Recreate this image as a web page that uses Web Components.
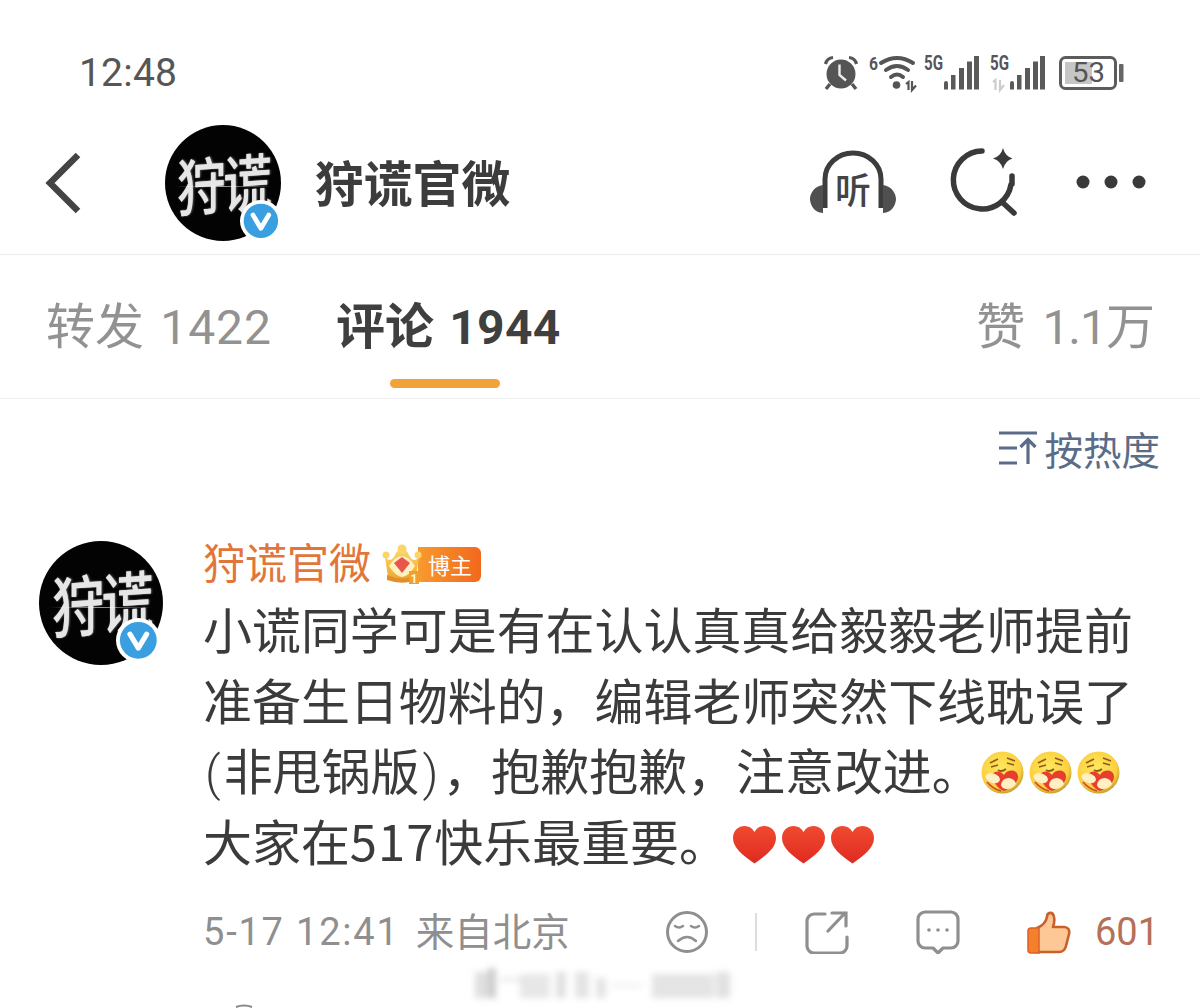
<!DOCTYPE html>
<html lang="zh"><head><meta charset="utf-8"><title>评论</title>
<style>
html,body{margin:0;padding:0;background:#fff}
body{width:1200px;height:1008px;overflow:hidden;position:relative;font-family:"Roboto","Noto Sans CJK SC",sans-serif}
x-comment .par{font-family:Roboto,sans-serif;font-weight:300;margin:0 3px 0 2px;line-height:1}
x-comment .par.e{margin:0 4px 0 3px}
x-comment .dg{letter-spacing:1px;line-height:1}
</style></head><body>
<x-status></x-status>
<x-nav></x-nav>
<x-tabs></x-tabs>
<x-sort></x-sort>
<x-comment>小谎同学可是有在认认真真给毅毅老师提前<br>准备生日物料的，编辑老师突然下线耽误了<br><span class="par">(</span>非甩锅版<span class="par e">)</span>，抱歉抱歉，注意改进。<x-emoji></x-emoji><x-emoji></x-emoji><x-emoji></x-emoji><br>大家在<span class="dg">517</span>快乐最重要。<x-heart></x-heart><x-heart></x-heart><x-heart></x-heart></x-comment>
<x-watermark></x-watermark>
<script>
const FONT='"Roboto","Noto Sans CJK SC",sans-serif';
function def(name,html){
  customElements.define(name,class extends HTMLElement{
    constructor(){super();this.attachShadow({mode:'open'}).innerHTML=html;}
  });
}
def('x-avatar',`<style>
:host{display:block;position:relative;width:var(--s);height:var(--s);flex:none}
.c{width:100%;height:100%;border-radius:50%;background:#030303;display:flex;align-items:center;justify-content:center;overflow:hidden;position:relative}
.t{color:#e6e6e6;font:500 calc(var(--s)*.42)/1 "Noto Sans CJK SC",sans-serif;letter-spacing:-.05em;white-space:nowrap;transform:translateY(-3%) scaleY(1.28) skewY(-3deg);text-shadow:0 0 1px rgba(255,255,255,.6),1px 0 2px rgba(255,255,255,.35)}
.l{position:absolute;left:8%;right:8%;top:53%;height:1px;background:linear-gradient(90deg,transparent,rgba(255,255,255,.6),transparent)}
svg{position:absolute;right:var(--o);bottom:var(--o);width:calc(var(--s)*.36);height:calc(var(--s)*.36)}
</style><div class="c"><span class="t">狩谎</span><i class="l"></i></div>
<svg viewBox="0 0 40 40"><circle cx="20" cy="20" r="20" fill="#fff"/><circle cx="20" cy="20" r="16.5" fill="#3a9fe0"/><path d="M12.5 14.5 20 27l7.5-12.5" fill="none" stroke="#fff" stroke-width="4.6" stroke-linejoin="round" stroke-linecap="round"/></svg>`);

const BARS=`<path d="M20 28a2 2 0 0 1 4 0v6.500h-4zM27 20h4.500v14.500H27zM35 13h5v21.500h-5zM43 6.500h5v28h-5zM50 1h5v33.500h-5z" fill="#5a5a5a"/>`;
def('x-status',`<style>
:host{display:flex;height:125px;box-sizing:border-box;padding:0 76px 0 79px;align-items:flex-start;justify-content:space-between;color:#555;font-family:${FONT}}
.time{font-size:39px;line-height:46px;margin-top:50px;color:#565656;letter-spacing:.2px}
.r{display:flex;margin-top:55px;height:36px;align-items:center}
svg{display:block;flex:none;overflow:visible}
text{font-family:"Roboto",sans-serif;font-weight:700;fill:#555}
</style><span class="time">12:48</span><div class="r">
<svg width="34" height="36" viewBox="0 0 34 36" style="margin-right:11px">
<circle cx="17" cy="19" r="14.5" fill="#555"/><path d="M15.500 9.500v10.500l6.500 5.500" fill="none" stroke="#eee" stroke-width="2.400"/>
<path d="M1.500 9Q3 3 9 2.500M32.500 9Q31 3 25 2.500" fill="none" stroke="#555" stroke-width="3.200"/><path d="M6 29l-4 5M28 29l4 5" stroke="#555" stroke-width="3.400"/></svg>
<svg width="47" height="36" viewBox="0 0 47 36" style="margin-right:8px">
<text x="0" y="14.500" font-size="19" textLength="9" lengthAdjust="spacingAndGlyphs">6</text>
<path d="M12 8Q28-2 44 8M17 15Q28 7 39 15M22 22Q28 17 34 22" fill="none" stroke="#555" stroke-width="4" stroke-linecap="round"/><circle cx="27.500" cy="30" r="3.800" fill="#555"/>
<path d="M37 29l2.500-2v8M43 26v9l4-4.500" fill="none" stroke="#555" stroke-width="2.200"/></svg>
<svg width="55" height="36" viewBox="0 0 55 36" style="margin-right:11px">
<text x="0" y="15" font-size="20" textLength="19" lengthAdjust="spacingAndGlyphs">5G</text>${BARS}</svg>
<svg width="55" height="36" viewBox="0 0 55 36" style="margin-right:14px">
<text x="0" y="15" font-size="20" textLength="19" lengthAdjust="spacingAndGlyphs">5G</text>
<path d="M3 27l2.500-2v10M10 25v10l4-5" fill="none" stroke="#ccc" stroke-width="2.200"/>${BARS}</svg>
<svg width="65" height="34" viewBox="0 0 65 34">
<rect x="1.500" y="1.500" width="55" height="31" rx="5" fill="#fff" stroke="#5c5c5c" stroke-width="3"/><rect x="6" y="6" width="27" height="22" fill="#c6c6c6"/>
<rect x="60" y="8" width="4.500" height="18" rx="1" fill="#666"/>
<text x="13" y="26" font-size="27" textLength="33" lengthAdjust="spacingAndGlyphs" style="font-weight:400">53</text></svg>
</div>`);

def('x-nav',`<style>
:host{display:flex;height:130px;box-sizing:border-box;border-bottom:1px solid #ececec;align-items:flex-start;padding-left:45px;--s:116px;--o:-1px;font-family:${FONT}}
.back{margin:27px 84px 0 0;display:block;flex:none}
.name{font:700 48.800px/112px "Noto Sans CJK SC",sans-serif;color:#3c3c3c;margin-left:34px;flex:1}
.i{display:block;flex:none;margin-top:25px}
</style>
<svg class="back" width="36" height="62" viewBox="0 0 36 62"><path d="M33 3 5 31l28 28" fill="none" stroke="#444" stroke-width="6.500"/></svg>
<x-avatar></x-avatar><span class="name">狩谎官微</span>
<svg class="i" width="88" height="64" viewBox="0 0 88 64" style="margin-right:52px">
<path d="M16 58V29a28 26 0 0 1 56 0v29" fill="none" stroke="#3d3d3d" stroke-width="5"/>
<path d="M14 35C5 36 1 44 1 49s4 14 13 14zM74 35c9 1 13 9 13 14s-4 14-13 14z" fill="#505050"/>
<text x="44" y="53.500" text-anchor="middle" font-size="36" font-weight="500" font-family="'Noto Sans CJK SC',sans-serif" fill="#444">听</text></svg>
<svg class="i" width="70" height="70" viewBox="0 0 70 70" style="margin:23px 57px 0 0">
<path d="M33 3a29 29 0 1 0 29 33.500M63 28v8" fill="none" stroke="#3a3a3a" stroke-width="5.500" stroke-linecap="round"/>
<path d="M53 54l12 11" stroke="#3a3a3a" stroke-width="5.500" stroke-linecap="round"/>
<path d="M54 0q2 8 9.500 10.500Q56 13 54 21q-2-8-10-10.500Q52 8 54 0z" fill="#3a3a3a"/></svg>
<svg class="i" width="70" height="14" viewBox="0 0 70 14" style="margin:50px 54px 0 0"><circle cx="7" cy="7" r="6.500" fill="#3a3a3a"/><circle cx="35" cy="7" r="6.500" fill="#3a3a3a"/><circle cx="63" cy="7" r="6.500" fill="#3a3a3a"/></svg>`);

def('x-tabs',`<style>
:host{display:flex;height:144px;box-sizing:border-box;border-bottom:1px solid #efefef;padding:0 45px 0 46px;font:400 49px/56px ${FONT};color:#929292}
.t{margin-top:45px;white-space:nowrap}
.d{font-size:48px;letter-spacing:1px;margin-left:4px}
.a{margin-left:64px;font-weight:700;color:#3f3f3f;display:flex;flex-direction:column;flex:1;align-items:flex-start}
.a .d{letter-spacing:.3px;margin-left:3px}
.z{letter-spacing:-1px;margin-left:5px}
.u{display:block;width:110px;height:9px;border-radius:5px;background:#f2a337;margin:23px 0 0 54px}
</style><span class="t">转发 <span class="d">1422</span></span><span class="t a"><span>评论 <span class="d">1944</span></span><i class="u"></i></span><span class="t">赞 <span class="d z">1.1</span>万</span>`);

def('x-sort',`<style>
:host{display:flex;justify-content:flex-end;align-items:center;height:97px;padding:0 40px 0 0;color:#5a6c88;font:400 38.500px/44px "Noto Sans CJK SC",sans-serif}
svg{margin-right:7px;display:block}
</style><svg width="38" height="34" viewBox="0 0 38 34"><path d="M0 2h38M0 17h18M0 32h18" stroke="#5a6c88" stroke-width="3.200" fill="none"/><path d="M29 33V10M21.500 16 29 8.500l7.500 7.500" stroke="#5a6c88" stroke-width="3.200" fill="none"/></svg><span>按热度</span>`);

def('x-emoji',`<style>:host{display:inline-block;width:43px;height:43px;margin:-10px 5px -10px 0;vertical-align:6px}svg{display:block}</style>
<svg width="43" height="43" viewBox="0 0 43 43"><defs><radialGradient id="g" cx=".45" cy=".4" r=".6"><stop offset="0" stop-color="#ffe85e"/><stop offset=".8" stop-color="#fbcf40"/><stop offset="1" stop-color="#c9a02c"/></radialGradient></defs>
<circle cx="21.500" cy="21.500" r="21" fill="url(#g)"/>
<path d="M9 12l8-4M10 16l7-2M26 7l8 3M26 12l7 2" stroke="#8a5a20" stroke-width="1.600" fill="none"/><path d="M17 19q4 2.500 8-1" stroke="#8a5a20" stroke-width="1.800" fill="none"/>
<path d="M11 24c3-5 9-4 12 0 3-6 13-6 14 1 1 7-9 13-14 15-6-2-11-9-12-16z" fill="#e83f2c"/>
<path d="M4 25q4-5 10-2 5 2 5 6-2 4-7 3-6-1-8-7zM20 34q1-7 8-7 6 1 7 6-3 5-9 5-5 0-6-4z" fill="#fff0c4"/><path d="M6 31q6 7 14 9" stroke="#c9502a" stroke-width="1.800" fill="none"/></svg>`);

def('x-heart',`<style>:host{display:inline-block;width:43px;height:38px;margin:-10px 6px -10px 0;vertical-align:7px}:host(:first-of-type){margin-left:5px}svg{display:block}</style>
<svg width="43" height="38" viewBox="0 0 43 38"><defs><linearGradient id="h" x1="0" y1="0" x2="0" y2="1"><stop offset="0" stop-color="#ef4a30"/><stop offset="1" stop-color="#e02a20"/></linearGradient></defs>
<path d="M21.500 37.500C10 29.500 0 22 0 12 0 4 6 0 11.500 0 16 0 19.500 2 21.500 6 23.500 2 27 0 31.500 0 37 0 43 4 43 12c0 10-10 17.500-21.500 25.500z" fill="url(#h)"/></svg>`);

def('x-comment',`<style>
:host{display:flex;padding:45px 0 0 39px;--s:124px;--o:2px;font-family:"Noto Sans CJK SC",sans-serif}
.m{margin-left:40px;flex:1;min-width:0}
.h{display:flex;align-items:center;height:46px}
.n{font-size:42px;line-height:46px;color:#e2763a;margin:0 0 6px 0}
.b{display:flex;margin-left:11px;align-items:center;position:relative}
.b svg{display:block;position:relative;z-index:1;margin-right:-4px}
.p{background:linear-gradient(90deg,#f89a2e,#f2681d);color:#fff;font-size:22px;line-height:35px;height:35px;width:63px;box-sizing:border-box;padding-left:10px;border-radius:0 6px 6px 0;white-space:nowrap}
.t{font-size:48.950px;line-height:70.500px;color:#3b3b3b;margin-top:6px;white-space:nowrap}
.f{display:flex;align-items:center;height:60px;margin-top:27px;color:#8f8f8f;font-size:38.500px;margin-right:41px}
.f .d{font-family:"Roboto",sans-serif;font-size:38px;letter-spacing:1.8px;margin-right:16px}
.f .l{margin-bottom:6px}
.f .w{flex:1}
.f svg{display:block;flex:none}
.c{font-family:"Roboto",sans-serif;color:#b5705a;margin-left:24px;font-size:38px}
</style>
<x-avatar></x-avatar>
<div class="m">
<div class="h"><span class="n">狩谎官微</span><span class="b">
<svg width="40" height="40" viewBox="0 0 40 40"><defs><linearGradient id="cr" x1="0" y1="0" x2="0" y2="1"><stop offset="0" stop-color="#fbd56a"/><stop offset="1" stop-color="#f0a52c"/></linearGradient></defs><path d="M3 13c4 5 8 4 11-4 1-2 3-3 6-3s5 1 6 3c3 8 7 9 11 4l-3 20c-8 4-20 4-28 0z" fill="url(#cr)"/><circle cx="20" cy="5" r="4.500" fill="#fbd56a"/><circle cx="4" cy="11" r="3.500" fill="#fbd56a"/><circle cx="36" cy="11" r="3.500" fill="#fbd56a"/><path d="M7 22q13-20 26 0-6 10-13 11-7-1-13-11z" fill="#fff0c0"/><path d="M20 13l8 6-8 10-8-10z" fill="#e8574a"/><path d="M5 31q15 6 22 2l0 5q-10 2-22-2z" fill="#e0902a"/><rect x="27" y="27" width="10" height="13" fill="#f0a030"/><text x="32" y="38.500" font-size="12" text-anchor="middle" font-family="Roboto" font-weight="700" fill="#fff6d8">1</text></svg>
<span class="p">博主</span></span></div>
<div class="t"><slot></slot></div>
<div class="f"><span class="d">5-17 12:41</span><span class="l">来自北京</span><span class="w"></span>
<svg width="44" height="44" viewBox="0 0 44 44"><circle cx="22" cy="22" r="19.500" fill="none" stroke="#8f8f8f" stroke-width="3"/><path d="M10 16q4 3 8 0M26 16q4 3 8 0M13 31q9-8 18 0" fill="none" stroke="#8f8f8f" stroke-width="2.500" stroke-linecap="round"/></svg>
<svg width="2" height="38" viewBox="0 0 2 38" style="margin:0 48px 0 46px"><rect width="2" height="38" fill="#ddd"/></svg>
<svg width="44" height="44" viewBox="0 0 44 44" style="margin-right:67px"><path d="M20 4H9a7 7 0 0 0-7 7v25a7 7 0 0 0 7 7h26a7 7 0 0 0 7-7V27" fill="none" stroke="#8f8f8f" stroke-width="3.200" stroke-linecap="round"/><path d="M23 21 40 3M27 3h14v13" fill="none" stroke="#8f8f8f" stroke-width="3.200" stroke-linecap="round"/></svg>
<svg width="44" height="44" viewBox="0 0 44 44" style="margin-right:67px"><path d="M9 2h26a7 7 0 0 1 7 7v22a7 7 0 0 1-7 7h-8l-5 5-5-5H9a7 7 0 0 1-7-7V9a7 7 0 0 1 7-7z" fill="none" stroke="#8f8f8f" stroke-width="3.200" stroke-linejoin="round"/><circle cx="13" cy="20" r="1.800" fill="#8f8f8f"/><circle cx="22" cy="20" r="1.800" fill="#8f8f8f"/><circle cx="31" cy="20" r="1.800" fill="#8f8f8f"/></svg>
<svg width="44" height="44" viewBox="0 0 44 44"><path d="M10 18c5-2 9-6 10-11 0-5 6-6 7 0 1 4 0 7-1 10h11c4 0 6 3 5 7l-3 12c-1 4-4 6-7 6H10z" fill="#fdc896" stroke="#c9602c" stroke-width="2.600" stroke-linejoin="round"/><path d="M4 18h8v25H4c-2 0-3-1-3-3V21c0-2 1-3 3-3z" fill="#f57f2a" stroke="#d9622a" stroke-width="1.500"/></svg>
<span class="c">601</span></div>
</div>`);

def('x-watermark',`<style>
:host{position:absolute;left:0;top:960px;width:1200px;height:48px;display:block;pointer-events:none}
svg{display:block}
</style><svg width="1200" height="48" viewBox="0 0 1200 48"><defs><filter id="b" x="-10%" y="-30%" width="120%" height="160%"><feGaussianBlur stdDeviation="3"/></filter></defs>
<g filter="url(#b)" fill="#c9c9c9">
<rect x="475" y="12" width="16" height="26" opacity=".6"/><rect x="488" y="8" width="8" height="30" opacity=".9"/><rect x="500" y="18" width="22" height="3" opacity=".5"/>
<rect x="520" y="14" width="30" height="24" opacity=".45"/><rect x="556" y="12" width="10" height="26" opacity=".55"/><rect x="575" y="12" width="14" height="26" opacity=".5"/><rect x="596" y="18" width="10" height="20" opacity=".5"/><rect x="612" y="24" width="30" height="3" opacity=".35"/>
<rect x="652" y="14" width="62" height="24" opacity=".5"/><rect x="716" y="12" width="14" height="26" opacity=".55"/></g>
<path d="M236 47q8-3 16 0" stroke="#888" stroke-width="2" fill="none"/></svg>`);
</script>
</body></html>
